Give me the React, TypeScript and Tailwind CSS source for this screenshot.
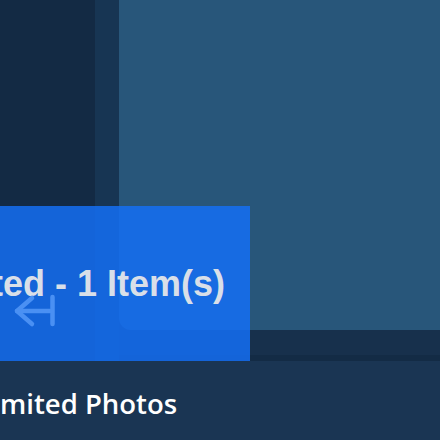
import React from 'react';

const BackArrow = () => (
  <svg width="60" height="40" viewBox="0 0 60 40" fill="none" stroke="#4a90f3" strokeWidth="4.5" strokeLinecap="round" strokeLinejoin="round">
    <polyline points="32,8 17,21 32,34" />
    <line x1="17" y1="21" x2="50" y2="21" />
    <line x1="52.5" y1="7" x2="52.5" y2="34" />
  </svg>
);

const App = () => {
  return (
    <div className="relative w-[440px] h-[440px] overflow-hidden bg-[#1a3553]">
      {/* top area */}
      <div className="flex h-[361px]">
        <div className="w-[95px] bg-[#132a44]" />
        <div className="w-[24px] bg-[#173553]" />
        <div className="flex-1 flex flex-col bg-[#17304c]">
          <div className="h-[330px] rounded-bl-xl bg-[#28567a]" />
          <div className="flex-1" />
          <div className="h-[6px] bg-[#132b45]" />
        </div>
      </div>

      {/* bottom label */}
      <div className="pt-[29px] overflow-hidden">
        <p className="font-['Open_Sans',sans-serif] font-semibold text-[27.5px] leading-none text-white whitespace-nowrap">
          mited Photos
        </p>
      </div>

      {/* drag preview overlay */}
      <div className="absolute left-0 top-[206px] w-[250px] h-[155px] bg-[rgba(21,112,248,0.83)] overflow-hidden">
        <p className="mt-[60px] -ml-[9px] font-['Liberation_Sans',Arial,sans-serif] font-bold text-[36px] leading-none text-[#d9dfe8] whitespace-nowrap">
          ted - 1 Item(s)
        </p>
        <div className="absolute left-0 top-[84px]">
          <BackArrow />
        </div>
      </div>
    </div>
  );
};

export default App;
